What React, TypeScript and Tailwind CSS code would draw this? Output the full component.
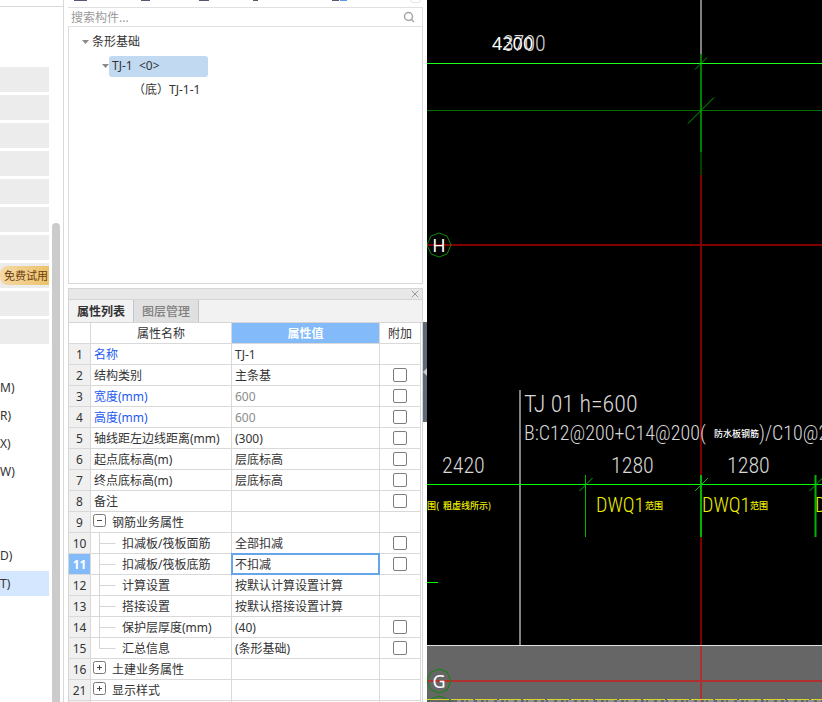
import { Search, X } from "lucide-react";

type Row = {
  no: number;
  name: string;
  value?: string;
  check?: boolean;
  blue?: boolean;
  muted?: boolean;
  kind?: "open" | "closed" | "child" | "last";
  active?: boolean;
};

const rows: Row[] = [
  { no: 1, name: "名称", value: "TJ-1", blue: true },
  { no: 2, name: "结构类别", value: "主条基", check: true },
  { no: 3, name: "宽度(mm)", value: "600", check: true, blue: true, muted: true },
  { no: 4, name: "高度(mm)", value: "600", check: true, blue: true, muted: true },
  { no: 5, name: "轴线距左边线距离(mm)", value: "(300)", check: true },
  { no: 6, name: "起点底标高(m)", value: "层底标高", check: true },
  { no: 7, name: "终点底标高(m)", value: "层底标高", check: true },
  { no: 8, name: "备注", check: true },
  { no: 9, name: "钢筋业务属性", kind: "open" },
  { no: 10, name: "扣减板/筏板面筋", value: "全部扣减", check: true, kind: "child" },
  { no: 11, name: "扣减板/筏板底筋", value: "不扣减", check: true, kind: "child", active: true },
  { no: 12, name: "计算设置", value: "按默认计算设置计算", kind: "child" },
  { no: 13, name: "搭接设置", value: "按默认搭接设置计算", kind: "child" },
  { no: 14, name: "保护层厚度(mm)", value: "(40)", check: true, kind: "child" },
  { no: 15, name: "汇总信息", value: "(条形基础)", check: true, kind: "last" },
  { no: 16, name: "土建业务属性", kind: "closed" },
  { no: 21, name: "显示样式", kind: "closed" },
];

const navItems = [
  { shaded: true },
  { shaded: true },
  { shaded: true },
  { shaded: true },
  { shaded: true },
  { shaded: true },
  { shaded: true },
  { shaded: true, trial: true },
  { shaded: true },
  { shaded: true },
  {},
  { label: "M)" },
  { label: "R)" },
  { label: "X)" },
  { label: "W)" },
  {},
  {},
  { label: "D)" },
  { label: "T)", selected: true },
] as { shaded?: boolean; trial?: boolean; label?: string; selected?: boolean }[];

const Sidebar = () => (
  <aside className="flex w-16 shrink-0 flex-col border-r border-[#d9d9d9]">
    <div className="h-[7px] shrink-0 border-b border-[#d9d9d9]" />
    <div className="flex min-h-0 flex-1 gap-[3px]">
      <nav className="flex w-[49px] flex-col gap-[3px] overflow-hidden pt-[60px]">
        {navItems.map((item, i) => (
          <div
            key={i}
            className={`flex h-[25px] shrink-0 items-center ${item.shaded ? "bg-[#ececec]" : ""} ${item.selected ? "bg-[#d5e7ff]" : ""}`}
          >
            {item.trial && (
              <button className="h-[19px] w-full overflow-hidden rounded-l-lg bg-gradient-to-r from-[#f5d9a4] to-[#ecc26a] pl-1 text-left text-[11px] leading-[19px] whitespace-nowrap text-[#6b3d10]">
                免费试用
              </button>
            )}
            {item.label && <a href="#" className="leading-5">{item.label}</a>}
          </div>
        ))}
      </nav>
      <div className="mt-[216px] w-2 rounded-t bg-[#cbcbcb]" />
    </div>
  </aside>
);

const Caret = () => (
  <svg width="7" height="4" viewBox="0 0 7 4" className="shrink-0">
    <path d="M0 0h7L3.5 4z" fill="#8a8a8a" />
  </svg>
);

const ComponentList = () => (
  <section className="flex h-[284px] shrink-0 flex-col">
    <svg className="h-[7px] w-full shrink-0">
      <path d="M6 0h13M73 0h9M131 0h10M185 0h5M264 0h7" stroke="#55586e" strokeWidth="2" />
      <path d="M272 0h7" stroke="#5b97ea" strokeWidth="2" />
      <rect x="342.5" y="-8.500" width="10" height="11" rx="3" fill="none" stroke="#e2e2e2" />
    </svg>
    <div className="flex h-5 shrink-0 items-center border-y border-r border-[#e0e0e0]">
      <input
        aria-label="搜索构件"
        placeholder="搜索构件..."
        className="h-[18px] min-w-0 flex-1 px-[3px] pt-[2px] outline-none placeholder:text-[#9a9a9a]"
      />
      <button aria-label="搜索" className="px-[7px]">
        <Search className="h-3 w-3 text-[#a5a5a5]" strokeWidth={3} />
      </button>
    </div>
    <div className="flex-1 border-x border-b border-[#d9d9d9] pt-[3px]">
      <div className="flex h-6 items-center gap-[3px] pl-[13px]">
        <Caret />
        条形基础
      </div>
      <div className="flex h-6 items-center pl-[33px]">
        <Caret />
        <span className="h-[21px] w-[99px] rounded-[3px] bg-[#c2d9f2] px-[3px] leading-5 whitespace-pre">
          {"TJ-1  <0>"}
        </span>
      </div>
      <div className="flex h-6 items-center pl-[64px]">（底）TJ-1-1</div>
    </div>
  </section>
);

const NameCell = ({ row }: { row: Row }) => {
  if (row.kind === "open" || row.kind === "closed") {
    return (
      <div className="flex h-5 items-start gap-[6px] pl-[2px]">
        <button aria-label={row.name} className="mt-[2px] shrink-0">
          <svg width="13" height="13" viewBox="0 0 13 13" fill="none" stroke="#777">
            <rect x="0.500" y="0.500" width="12" height="12" rx="2" />
            <path d={row.kind === "open" ? "M4 6.500h5" : "M4 6.500h5M6.500 4v5"} stroke="#444" />
          </svg>
        </button>
        <span className="pt-[2px]">{row.name}</span>
      </div>
    );
  }
  if (row.kind) {
    return (
      <div className="flex h-5 items-start">
        <svg width="31" height="21" fill="none" stroke="#d6d6d6" className="shrink-0">
          <path d={row.kind === "last" ? "M8.500 0v10.500h16" : "M8.500 0v21M8.500 10.500h16"} />
        </svg>
        <span className="pt-[2px]">{row.name}</span>
      </div>
    );
  }
  return (
    <div className={`pt-[2px] pl-[3px] whitespace-nowrap ${row.blue ? "text-[#1e5af0]" : ""}`}>{row.name}</div>
  );
};

const cell = "h-[21px] border-r border-b border-[#d9d9d9] px-0 pb-0 leading-[18px]";

const PropertyPanel = () => (
  <section className="mt-1 flex min-h-0 flex-1 flex-col overflow-hidden border-x border-t border-[#d5d5d5]">
    <div className="flex h-[11px] shrink-0 items-center justify-end border-b border-[#d5d5d5] bg-[#e8e8e8] pr-px">
      <button aria-label="关闭">
        <X className="h-[12px] w-[12px] text-[#999]" />
      </button>
    </div>
    <div className="flex h-[23px] shrink-0 border-b border-[#d5d5d5] bg-[#f2f2f2] leading-[22px]">
      <button className="w-[65px] border-r border-[#c4c4cc] bg-[#f2f2f2] pt-px font-bold">属性列表</button>
      <button className="w-[65px] border-r border-[#c4c4cc] bg-[#e0e0e0] pt-px font-medium text-[#808080]">图层管理</button>
    </div>
    <div className="pr-px">
      <table className="w-full table-fixed border-separate border-spacing-0">
        <colgroup>
          <col className="w-[22px]" />
          <col className="w-[141px]" />
          <col />
          <col className="w-[41px]" />
        </colgroup>
        <thead>
          <tr>
            <th className={cell} />
            <th className={`${cell} pt-[2px] font-normal`}>属性名称</th>
            <th className={`${cell} bg-[#82bafa] pt-[2px] text-white`}>属性值</th>
            <th className={`${cell} pt-[2px] font-normal`}>附加</th>
          </tr>
        </thead>
        <tbody>
          {rows.map((row) => (
            <tr key={row.no}>
              <td
                className={`${cell} pt-[2px] text-center ${row.active ? "bg-[#82bafa] font-bold text-white" : "bg-[#f0f0f0]"}`}
              >
                {row.no}
              </td>
              <td className={`${cell} pt-0`}>
                <NameCell row={row} />
              </td>
              {row.active ? (
                <td className={`${cell} relative`}>
                  <input
                    aria-label={row.name}
                    defaultValue={row.value}
                    className="absolute -inset-px h-[22px] w-[calc(100%+2px)] border-2 border-[#68a4e8] bg-white px-[2px] outline-none"
                  />
                </td>
              ) : (
                <td className={`${cell} pt-[2px] ${row.muted ? "text-[#8c8c8c]" : ""}`}>
                  <span className="pl-[3px]">{row.value}</span>
                </td>
              )}
              <td className={`${cell} pt-0`}>
                {row.check && (
                  <input
                    type="checkbox"
                    aria-label={`附加 ${row.name}`}
                    className="mx-auto block h-[14px] w-[14px] appearance-none rounded-[2px] border border-[#7d7d7d] bg-white"
                  />
                )}
              </td>
            </tr>
          ))}
          <tr>
            <td className={`${cell} bg-[#f0f0f0]`} />
            <td className={cell} />
            <td className={cell} />
            <td className={cell} />
          </tr>
        </tbody>
      </table>
    </div>
  </section>
);

const Splitter = () => (
  <div className="w-1 shrink-0 pt-[322px]">
    <button aria-label="收起" className="flex h-[100px] w-1 items-center bg-[#5f6b78]">
      <svg width="4" height="8" viewBox="0 0 4 8">
        <path d="M4 0v8L0 4z" fill="#c8ccd0" />
      </svg>
    </button>
  </div>
);

const cadFont = "font-['Roboto_Condensed','Roboto',sans-serif] font-light";
const cadHan = "font-['Noto_Sans_CJK_SC',sans-serif] text-[9px] font-medium";

// axis ticks on the dimension line
const ticks = [158.5, 274, 388.5];

const Drawing = () => (
  <main className="min-w-0 flex-1 bg-black">
    <svg className="block h-full w-full" fill="none">
      <rect y="645" width="100%" height="100%" fill="#666" />
      <line y1="645.500" x2="100%" y2="645.500" stroke="#e0e0e0" />

      <path d="M274 0v54" stroke="#808080" strokeWidth="2" />
      <path d="M274 175v470" stroke="#800000" strokeWidth="2" />
      <path d="M274 646v100" stroke="#b03030" strokeWidth="2" />
      <path d="M274 152v23" stroke="#004000" strokeWidth="2" />
      <path d="M274 54v98" stroke="#008000" strokeWidth="2" />
      <line x1="0" y1="245" x2="100%" y2="245" stroke="#800000" strokeWidth="2" />
      <line x1="0" y1="681" x2="100%" y2="681" stroke="#b03030" strokeWidth="2" />
      <line x1="0" y1="63.500" x2="100%" y2="63.500" stroke="#1cff1c" />
      <line x1="0" y1="110.500" x2="100%" y2="110.500" stroke="#007000" />
      <path d="M268 69.500l12-12M261 123.500l26-26" stroke="#00a800" />
      <path d="M93 390v255" stroke="#808080" strokeWidth="2" />

      <line x1="0" y1="484.500" x2="100%" y2="484.500" stroke="#00ff00" />
      {ticks.map((x) => (
        <g key={x} stroke="#00b400">
          <line x1={x} y1="475" x2={x} y2="537" strokeWidth={x === 158.5 ? 1 : 2} />
          <line x1={x - 6} y1="491" x2={x + 7} y2="478" />
        </g>
      ))}
      <path d="M0 582.500h11" stroke="#00ff00" />

      <g stroke="#0c860c">
        <path d="M12 233l8 3 4 9-4 9-8 3-8-3-4-9 4-9z" />
        <path d="M12 669l8 3 4 9-4 9-8 3-8-3-4-9 4-9z" />
        <path d="M0 702l4-3 8-3 8 3 4 3" />
      </g>
      <line x1="0" y1="699.500" x2="100%" y2="699.500" stroke="#d4d42a" strokeDasharray="22 2" />
      <line x1="30" y1="701" x2="100%" y2="701" stroke="#929292" strokeWidth="2" strokeDasharray="4 3 2 2 6 3" />

      <g fill="#fff" className="font-['Noto_Sans',sans-serif] text-[18px]">
        <text x="65" y="50">4200</text>
        <text x="12" y="252" textAnchor="middle">H</text>
        <text x="12" y="688" textAnchor="middle">G</text>
      </g>
      <g fill="#d8d8d8" className={cadFont}>
        <g className="text-[22px]">
          <text x="76" y="51">3700</text>
          <text x="15" y="473">2420</text>
          <text x="184" y="473">1280</text>
          <text x="300" y="473">1280</text>
        </g>
        <text x="97" y="412" className="text-[24px]">TJ 01 h=600</text>
        <g className="text-[20px]">
          <text x="97" y="440">B:C12@200+C14@200(</text>
          <text x="332" y="440">)/C10@200</text>
        </g>
      </g>
      <text x="287" y="437" fill="#fff" className={cadHan}>防水板钢筋</text>
      <g fill="#f0f000" className={`${cadFont} text-[20px]`}>
        <text x="169" y="512">DWQ1</text>
        <text x="275" y="512">DWQ1</text>
        <text x="388" y="512">DWQ1</text>
      </g>
      <g fill="#f0f000" className={cadHan}>
        <text x="0" y="509">围(</text>
        <text x="16" y="509">粗虚线所示)</text>
        <text x="218" y="509">范围</text>
        <text x="323" y="509">范围</text>
      </g>
    </svg>
  </main>
);

const App = () => (
  <div className="flex h-screen overflow-hidden bg-white font-['Noto_Sans','Noto_Sans_CJK_SC',sans-serif] text-[12px] leading-5 text-[#333]">
    <Sidebar />
    <div className="ml-1 flex w-[355px] shrink-0 flex-col">
      <ComponentList />
      <PropertyPanel />
    </div>
    <Splitter />
    <Drawing />
  </div>
);

export default App;
